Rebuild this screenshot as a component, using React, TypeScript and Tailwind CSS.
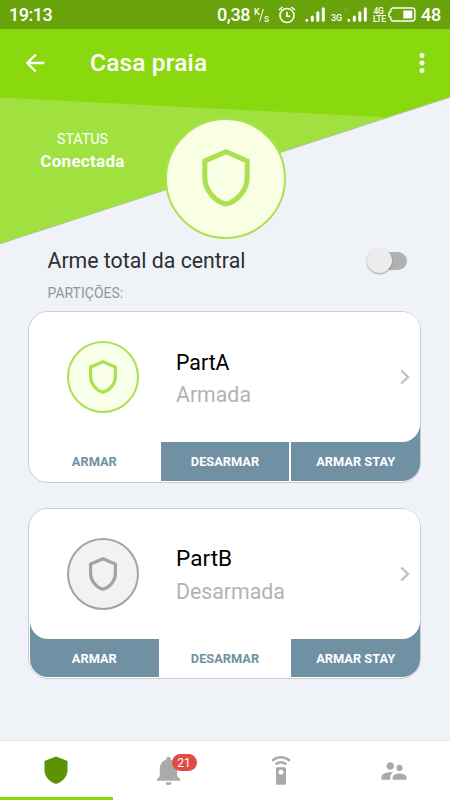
import { MdArrowBack, MdMoreVert, MdNotifications, MdSettingsRemote, MdSupervisorAccount } from "react-icons/md";

const ShieldOutline = ({ className, strokeWidth = 5 }: { className: string; strokeWidth?: number }) => (
  <svg viewBox="0 0 48 58" className={className} fill="none" stroke="currentColor" strokeWidth={strokeWidth}>
    <path d="M24 2.8 45.2 12V28.5C45.2 41 35.5 52 24 55.2C12.5 52 2.8 41 2.8 28.5V12Z" />
  </svg>
);

const Signal = () => (
  <svg viewBox="0 0 20 15" className="h-[15px] w-[20px]" fill="none" stroke="currentColor" strokeWidth="3" strokeLinecap="round">
    <path d="M1.8 13.2v.1M7.3 10v3.3M12.8 5.8v7.5M18.3 1.7v11.6" />
  </svg>
);

const StatusBar = () => (
  <div className="flex h-[29px] items-center bg-[#69a30b] pl-[9px] text-white">
    <span className="w-[208px] text-[18px] font-medium leading-none tracking-[-0.5px]">19:13</span>
    <span className="w-[36px] text-[18px] font-medium leading-none tracking-[-0.4px]">0,38</span>
    <svg viewBox="0 0 17 16" className="h-4 w-[17px]" fill="currentColor">
      <text x="1" y="8" fontSize="9" fontWeight="500">K</text>
      <text x="11" y="15" fontSize="10" fontWeight="400">s</text>
      <path d="M10.3 2 6.5 14.5" stroke="currentColor" />
    </svg>
    <svg viewBox="0 0 18 18" className="ml-[8px] h-[18px] w-[18px]" fill="none" stroke="currentColor" strokeWidth="1.6">
      <circle cx="9" cy="9.5" r="7" />
      <path d="M9 5.7v4.6h3.3M1 4 4.5 1M17 4 13.5 1" />
    </svg>
    <div className="ml-[9px] mt-[-1px]"><Signal /></div>
    <span className="ml-[6px] mt-[7px] w-[12px] text-[9px] font-medium leading-none">3G</span>
    <div className="relative ml-[4px] mt-[-1px]">
      <Signal />
      <span className="absolute -left-[4px] -top-[1px] text-[6px] leading-none opacity-40">↓↑</span>
    </div>
    <span className="ml-[6px] w-[11px] text-center text-[8.5px] font-medium leading-[8px] tracking-[-0.3px]">4G LTE</span>
    <svg viewBox="0 0 28 15" className="ml-[4px] h-[15px] w-[28px]" fill="none" stroke="currentColor" strokeWidth="1.4">
      <path d="M5.2 1h19q2.7 0 2.7 2.7v7.6q0 2.7-2.7 2.7h-19q-2.5 0-2.5-2.7v-1.1q-1.8-.2-1.8-1.2V6q0-1 1.8-1.2V3.7Q2.7 1 5.2 1Z" />
      <path d="M15.3 3.5h9v8h-9z" fill="currentColor" stroke="none" />
    </svg>
    <span className="ml-[5px] text-[18px] font-medium leading-none tracking-[-0.3px]">48</span>
  </div>
);

const Hero = () => (
  <div className="relative h-[215px]">
    <svg viewBox="0 0 450 215" className="absolute inset-0 h-full w-full">
      <path d="M0 0H450V68.3L0 214.8Z" fill="#8ad90e" />
      <path d="M0 68.5 388 88.5 0 214.8Z" fill="#a0e13f" />
      <path d="M0 214.8 450 68.3" stroke="#b4bfae" strokeWidth="0.8" />
    </svg>
    <div className="relative flex h-[68px] items-center text-white">
      <MdArrowBack className="ml-[21px] h-[28px] w-[28px]" />
      <h1 className="ml-[41px] mt-px text-[24.5px] font-medium leading-none tracking-[0.15px]">Casa praia</h1>
      <MdMoreVert className="ml-auto mr-[13px] h-[30px] w-[30px]" />
    </div>
    <div className="relative flex">
      <div className="mt-[32px] w-[165px] text-center text-white">
        <p className="text-[14.3px] leading-[20px]">STATUS</p>
        <p className="mt-px text-[17px] font-bold leading-[22px] tracking-[0.3px]">Conectada</p>
      </div>
      <div className="mt-[20.5px] flex h-[121px] w-[121px] items-center justify-center rounded-full border-2 border-[#abe151] bg-[#f9ffe3]">
        <ShieldOutline className="-mt-px h-[58px] w-[48px] text-[#abe151]" />
      </div>
    </div>
  </div>
);

type PartitionProps = { name: string; status: string; armed: boolean; active: number };

const PartitionCard = ({ name, status, armed, active }: PartitionProps) => (
  <div className={`w-[393px] rounded-[20px] border border-[#cccdd2] bg-white pb-px pl-px ${armed ? "h-[172px]" : "h-[171px]"}`}>
    <div className="flex h-full flex-col overflow-hidden rounded-[18px]">
      <div className="relative z-10 flex h-[129.5px] shrink-0 items-center rounded-b-[18px] bg-white">
        <div
          className={`ml-[37px] flex h-[71.5px] w-[71.5px] items-center justify-center rounded-full border-2 ${
            armed ? "border-[#abe151] bg-[#f9ffe8] text-[#abe151]" : "border-[#a3a3a3] bg-[#f2f2f2] text-[#a3a3a3]"
          }`}
        >
          <ShieldOutline className="h-[34px] w-[28px]" strokeWidth={5.5} />
        </div>
        <div className="ml-[37.5px] pt-[4px]">
          <h2 className={`text-black ${armed ? "text-[21.3px] leading-[32px]" : "text-[22.6px] leading-[33px]"}`}>{name}</h2>
          <p className={`text-[21.3px] text-[#b3b3b3] ${armed ? "leading-[32px]" : "leading-[34px]"}`}>{status}</p>
        </div>
        <svg viewBox="0 0 10 16" className="ml-auto mr-[10px] h-4 w-[10px]" fill="none" stroke="#c0c0c0" strokeWidth="2.4">
          <path d="m1.2 1.5 6.8 6.5-6.8 6.5" />
        </svg>
      </div>
      <div className="-mt-[18px] grid flex-1 grid-cols-3 gap-x-[2px]">
        {["ARMAR", "DESARMAR", "ARMAR STAY"].map((label, i) => (
          <button
            key={label}
            className={`pt-[19px] text-[12.8px] font-bold ${i === active ? "bg-white text-[#7090a3]" : "bg-[#7090a3] text-white"}`}
          >
            {label}
          </button>
        ))}
      </div>
    </div>
  </div>
);

const BottomNav = () => (
  <nav className="grid h-[60px] grid-cols-4 border-t border-[#e2e4ea] bg-white text-[#aaaaaa]">
    <div className="flex items-center justify-center border-b-[3px] border-[#8ad90e]">
      <svg viewBox="0 0 24 28" className="mt-[2px] h-[28px] w-[24px]" fill="#5c9203">
        <path d="M12 .5 23.5 5V14C23.5 20.5 18.5 26 12 28C5.5 26 .5 20.5 .5 14V5Z" />
      </svg>
    </div>
    <div className="relative flex items-center justify-center">
      <MdNotifications className="h-[35px] w-[35px]" />
      <span className="absolute left-[59px] top-[13px] flex h-[17px] w-[25px] items-center justify-center rounded-full bg-[#e04b43] text-[12px] leading-none text-white">
        21
      </span>
    </div>
    <div className="flex items-center justify-center">
      <MdSettingsRemote className="h-[30px] w-[30px]" />
    </div>
    <div className="flex items-center justify-center">
      <MdSupervisorAccount className="h-[30px] w-[30px]" />
    </div>
  </nav>
);

export default function App() {
  return (
    <div className="flex h-[800px] w-[450px] flex-col overflow-hidden bg-[#eff3f7] font-['Roboto',sans-serif]">
      <StatusBar />
      <Hero />
      <main className="flex-1 pl-[28px]">
        <div className="flex items-center justify-between pl-[19.5px] pr-[43px]">
          <span className="pt-px text-[21.3px] leading-[32px] text-[#2b2f33]">Arme total da central</span>
          <div className="flex h-[18px] w-[36px] items-center rounded-full bg-[#b1b1b1]">
            <span className="-ml-[4px] h-[25px] w-[25px] shrink-0 rounded-full bg-[#ececec] shadow-[0_1px_2px_rgba(0,0,0,0.35)]" />
          </div>
        </div>
        <p className="mt-[6px] pl-[19.5px] text-[14px] leading-[20px] text-[#92979b]">PARTIÇÕES:</p>
        <div className="mt-[8px] flex flex-col gap-[25px]">
          <PartitionCard name="PartA" status="Armada" armed active={0} />
          <PartitionCard name="PartB" status="Desarmada" armed={false} active={1} />
        </div>
      </main>
      <BottomNav />
    </div>
  );
}
